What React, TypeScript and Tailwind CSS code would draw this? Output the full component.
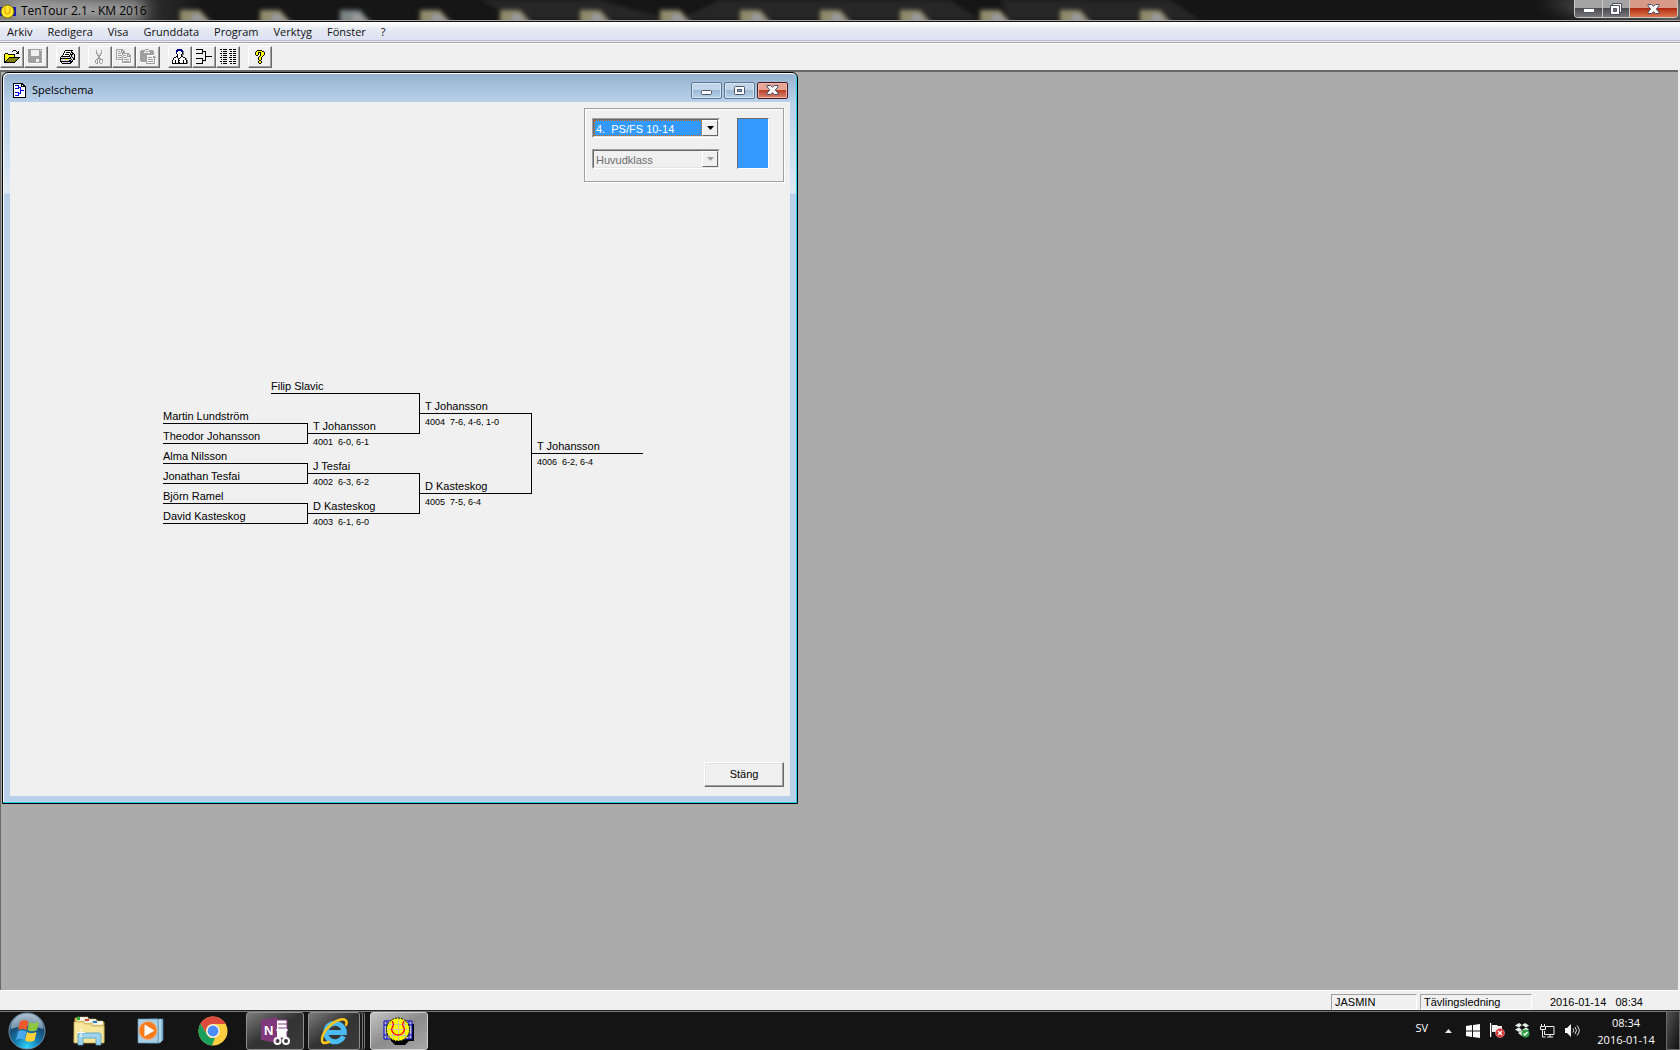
import type { ReactNode } from 'react';

const PALETTE: Record<string, string> = {
  k: '#000000',
  y: '#ffff00',
  o: '#808000',
  g: '#a0a0a0',
  w: '#ffffff',
  n: '#000080',
  b: '#0000e0',
  s: '#808080',
  c: '#d8d8d8',
};

const SPRITES = {
  open: [
    '.........kkk....',
    '........k...k.k.',
    '.............kk.',
    '.kkk........kkk.',
    'kyyykkkkkkk.....',
    'kyyyyyyyyyk.....',
    'kyyyyyyyyyk.....',
    'kyyyykkkkkkkkkkk',
    'kyyykoooooooook.',
    'kyykoooooooook..',
    'kykoooooooook...',
    'kkoooooooook....',
    'kkkkkkkkkkk.....',
  ],
  save: [
    'gggggggggggggg.',
    'ggg........g.gw',
    'ggg........gggw',
    'ggg........gggw',
    'ggg........gggw',
    'ggg........gggw',
    'ggg........gggw',
    'ggggggggggggggw',
    'ggggggggggggggw',
    'ggggggggggggggw',
    'gggggggg...gggw',
    'gggggggg...gggw',
    'gggggggg...gggw',
    '.gggggggggggggw',
    '..wwwwwwwwwwwww',
  ],
  print: [
    '.....kkkkkkkk...',
    '....kwwwwwwk....',
    '....kwkkkkwkk...',
    '...kwwwwwwk.kk..',
    '...kwkkkkwkkkck.',
    '..kwwwwwwkckcck.',
    '.kkkkkkkkkckcck.',
    'kccccccccckckck.',
    'kkkkkkkkkkkcckk.',
    'kccccyyyccckckk.',
    'kcccccccckkck..',
    'kkkkkkkkkkkkk...',
    '.kcccccccckk....',
    '..kkkkkkkkk.....',
  ],
  cut: [
    '.g....g...',
    '.g....gw..',
    '.g....gw..',
    '.gg..ggw..',
    '..g..g.w..',
    '..gggg....',
    '...gg.w...',
    '...gg.....',
    '..gggg....',
    '.gg.gggg..',
    'g.g.g..g..',
    'g.gwg..gw.',
    'g.gwg..gw.',
    '.gg..gg.w.',
  ],
  copy: [
    'ggggggg.........',
    'g....ggg........',
    'g.gg.g.gg.......',
    'g....gggg.......',
    'g.ggg.ggggggg...',
    'g.....g....ggg..',
    'g.gggg.ggg.g.gg.',
    'g.....g....gggg.',
    'g.gggg.gggg...gw',
    'g.....g.......gw',
    'ggggggg.ggggg.gw',
    '.wwwwwg.......gw',
    '......g.ggggg.gw',
    '......gggggggggw',
    '.......wwwwwwwww',
  ],
  paste: [
    '.....gggg.......',
    '.gggg....gggg...',
    'ggggg.gg.ggggg..',
    'gggg......gggg..',
    'gggggggggggggg..',
    'gggggggggggggg..',
    'gggggggwwwwwww..',
    'ggggggg......gg.',
    'ggggggg.gggg.ggg',
    'ggggggg.......gw',
    'ggggggg.ggggg.gw',
    'ggggggg.......gw',
    '.gggggg.ggggg.gw',
    '.wwwwwg.......gw',
    '......gggggggggw',
  ],
  person: [
    '.....nnnnn......',
    '....nnnnnnn.....',
    '....nnwwwnns....',
    '....nwwwwwns....',
    '....kwwwwwks....',
    '.....kwwwkss....',
    '.....kwwwks.....',
    '....kkwwwkk.....',
    '..kkwkwwkwwkk...',
    '.kwwwwkkwwwwwks.',
    '.kwwwwkwwwwwwks.',
    'kwwkwwkkwwwkwwks',
    'kwwkwwkwwwwkwwks',
    'kwwkwwkkwwwkwwks',
    'kkkkkkkkkkkkkkks',
  ],
  bracket: [
    'kkkkkkk.........',
    '......k.........',
    '......kkkk......',
    '......k..k......',
    'kkkkkkk..k......',
    '.........k......',
    '.........k......',
    '.........kkkkkkk',
    '.........k......',
    'kkkkkkk..k......',
    '......k..k......',
    '......kkkk......',
    '......k.........',
    '......k.........',
    'kkkkkkk.........',
  ],
  list: [
    'kk.kkkk..kkk.kkk',
    '................',
    '.k.kkkk...kk.kkk',
    '................',
    'kk.kkkk..kkk.kkk',
    '................',
    '.k.kkkk...kk.kkk',
    '................',
    'kk.kkkk..kkk.kkk',
    '................',
    '.k.kkkk...kk.kkk',
    '................',
    'kk.kkkk..kkk.kkk',
    '................',
    '.k.kkkk...kk.kkk',
  ],
  help: [
    '...kkkkk...',
    '..kyyyyykk.',
    '.kyykkkyyyk',
    '.kyyk.kyyyk',
    '.kyyk.kyyyk',
    '..kk..kyyk.',
    '.....kyyk..',
    '....kyyk...',
    '....kyyk...',
    '....kyyk...',
    '.....kk....',
    '....kyyk...',
    '....kyyk...',
    '.....kk....',
  ],
  schema: [
    'kkkkkkkkkk...',
    'kwwwwwwwkkk..',
    'kwbbbbwwkwkk.',
    'kwwwwbwwkkkkk',
    'kwwwwbbbwwwwk',
    'kwbbbbwbwwwwk',
    'kwwwwwwbwwwwk',
    'kwwwwwwbbbbwk',
    'kwwwwwwbwwwwk',
    'kwbbbbwbwwwwk',
    'kwwwwbbbwwwwk',
    'kwwwwbwwwwwwk',
    'kwbbbbwwwwwwk',
    'kwwwwwwwwwwwk',
    'kkkkkkkkkkkkk',
  ],
};

type SpriteName = keyof typeof SPRITES;

function Sprite({ name }: { name: SpriteName }) {
  const rows = SPRITES[name];
  const width = rows[0].length;
  return (
    <svg width={width} height={rows.length} shapeRendering="crispEdges" aria-hidden="true" className="shrink-0">
      {rows.flatMap((row, y) =>
        [...row].map((cell, x) =>
          PALETTE[cell] ? <rect key={`${x}-${y}`} x={x} y={y} width="1" height="1" fill={PALETTE[cell]} /> : null,
        ),
      )}
    </svg>
  );
}

const MENU = ['Arkiv', 'Redigera', 'Visa', 'Grunddata', 'Program', 'Verktyg', 'Fönster', '?'];

const TOOL_GROUPS: { icon: SpriteName; label: string; disabled?: boolean }[][] = [
  [
    { icon: 'open', label: 'Öppna' },
    { icon: 'save', label: 'Spara', disabled: true },
  ],
  [{ icon: 'print', label: 'Skriv ut' }],
  [
    { icon: 'cut', label: 'Klipp ut', disabled: true },
    { icon: 'copy', label: 'Kopiera', disabled: true },
    { icon: 'paste', label: 'Klistra in', disabled: true },
  ],
  [
    { icon: 'person', label: 'Spelare' },
    { icon: 'bracket', label: 'Spelschema' },
    { icon: 'list', label: 'Matchlista' },
  ],
  [{ icon: 'help', label: 'Hjälp' }],
];

// x is the left end of the line, y the line itself
const ENTRIES = [
  { x: 261, y: 291, name: 'Filip Slavic' },
  { x: 153, y: 321, name: 'Martin Lundström' },
  { x: 153, y: 341, name: 'Theodor Johansson' },
  { x: 153, y: 361, name: 'Alma Nilsson' },
  { x: 153, y: 381, name: 'Jonathan Tesfai' },
  { x: 153, y: 401, name: 'Björn Ramel' },
  { x: 153, y: 421, name: 'David Kasteskog' },
  { x: 303, y: 331, name: 'T Johansson', score: '4001  6-0, 6-1' },
  { x: 303, y: 371, name: 'J Tesfai', score: '4002  6-3, 6-2' },
  { x: 303, y: 411, name: 'D Kasteskog', score: '4003  6-1, 6-0' },
  { x: 415, y: 311, name: 'T Johansson', score: '4004  7-6, 4-6, 1-0' },
  { x: 415, y: 391, name: 'D Kasteskog', score: '4005  7-5, 6-4' },
  { x: 527, y: 351, name: 'T Johansson', score: '4006  6-2, 6-4' },
];

const LINES = [
  'M261 291H409V331H298',
  'M153 321H297V341H153',
  'M153 361H297V381H153',
  'M153 401H297V421H153',
  'M298 371H409V411H298',
  'M410 311H521V391H410',
  'M522 351H632',
].join('');

function Bracket() {
  return (
    <div className="absolute left-0 top-0 text-black">
      <svg width="640" height="430" shapeRendering="crispEdges" aria-hidden="true">
        <path d={LINES} transform="translate(.5 .5)" fill="none" stroke="#000" strokeLinecap="square" />
      </svg>
      {ENTRIES.map((entry) => (
        <div
          key={`${entry.x}-${entry.y}`}
          className="absolute whitespace-pre"
          style={{ left: entry.x, top: entry.y - 14 }}
        >
          <p className="text-[11px] leading-[14px]">{entry.name}</p>
          {entry.score && <p className="pt-1 text-[9px] leading-[10px]">{entry.score}</p>}
        </div>
      ))}
    </div>
  );
}

function ClassSelect({ label, value, disabled = false }: { label: string; value: string; disabled?: boolean }) {
  return (
    <div className="flex h-5 w-32 border border-b-white border-l-[#a0a0a0] border-r-white border-t-[#a0a0a0]">
      <div className="relative flex w-full border border-b-[#e3e3e3] border-l-[#696969] border-r-[#e3e3e3] border-t-[#696969]">
        <select
          aria-label={label}
          disabled={disabled}
          defaultValue={value}
          className={
            disabled
              ? 'w-full appearance-none bg-[#f0f0f0] pl-[2px] pt-px text-[11px] leading-4 text-[#6d6d6d] opacity-100'
              : 'mr-4 w-full appearance-none border border-dotted border-[#cc6600] bg-[#3399ff] pl-px pt-px text-[11px] leading-[14px] text-white outline-none'
          }
        >
          <option>{value}</option>
        </select>
        <span className="pointer-events-none absolute inset-y-0 right-0 flex w-4 items-center justify-center border border-b-[#696969] border-l-white border-r-[#696969] border-t-white bg-[#f0f0f0]">
          <svg width="7" height="4" aria-hidden="true">
            <path d="M0 0h7L3.500 4z" fill={disabled ? '#a0a0a0' : '#000'} />
          </svg>
        </span>
      </div>
    </div>
  );
}

function ChildButton({ label, close = false, children }: { label: string; close?: boolean; children: ReactNode }) {
  return (
    <button
      type="button"
      aria-label={label}
      className={
        close
          ? 'flex h-[17px] w-[31px] items-center justify-center rounded-[2px] border border-[#4c1a1e] bg-linear-to-b from-[#e8a595] from-45% via-[#bb4128] via-50% to-[#d88470] shadow-[inset_0_0_0_1px_#ecb8ac]'
          : 'flex h-[17px] w-[31px] items-center justify-center rounded-[2px] border border-[#5c7590] bg-linear-to-b from-[#c0d5ea] from-45% via-[#9cb9d6] via-50% to-[#b8d0e8] shadow-[inset_0_0_0_1px_#d8e6f4]'
      }
    >
      {children}
    </button>
  );
}

function CloseGlyph() {
  return (
    <svg width="13" height="10" viewBox="0 0 13 10" aria-hidden="true">
      <path
        d="M1 .5h3.500l2 1.700 2-1.700H12V2L9.300 5 12 8v1.500H8.500l-2-1.700-2 1.700H1V8l2.700-3L1 2z"
        fill="#f8f8f8"
        stroke="#4a4f66"
      />
    </svg>
  );
}

function SchemaWindow() {
  return (
    <section
      aria-label="Spelschema"
      className="flex h-[732px] w-[796px] flex-col rounded-t-[6px] border border-black bg-linear-to-b from-[#b9d1ea] from-[30px] via-[#dfeaf6] via-[120px] to-[#b9d1ea] to-[121px] shadow-[inset_-1px_-1px_0_#22d3ee,inset_1px_1px_0_#fff]"
    >
      <header className="mx-px mt-px flex h-7 shrink-0 items-center rounded-t-[5px] bg-linear-to-b from-[#98b2ce] to-[#b9d1ea] pl-[9px] pr-2 pt-1">
        <Sprite name="schema" />
        <h2 className="flex-1 pl-[6px] pt-px text-[11px] text-black font-['Open_Sans','Noto_Sans',sans-serif]">
          Spelschema
        </h2>
        <div className="flex gap-[2px]">
          <ChildButton label="Minimera">
            <svg width="11" height="5" aria-hidden="true" className="mt-1">
              <rect x=".5" y=".5" width="10" height="4" rx="1" fill="#fff" stroke="#4a5568" />
            </svg>
          </ChildButton>
          <ChildButton label="Maximera">
            <svg width="11" height="9" aria-hidden="true">
              <rect x=".5" y=".5" width="10" height="8" rx="1" fill="#fff" stroke="#4a5568" />
              <rect x="3.500" y="3.500" width="4" height="2" fill="#8fb0d4" stroke="#4a5568" />
            </svg>
          </ChildButton>
          <ChildButton label="Stäng fönster" close>
            <CloseGlyph />
          </ChildButton>
        </div>
      </header>
      <div className="relative mx-[7px] mb-[7px] flex flex-1 flex-col items-end justify-between bg-[#f0f0f0] px-[6px] pb-[9px] pt-[6px]">
        <Bracket />
        <div className="relative flex h-[74px] w-[200px] justify-between border border-[#a0a0a0] py-[9px] pl-[7px] pr-[14px] shadow-[1px_1px_0_#fff,inset_1px_1px_0_#fff]">
          <div className="flex flex-col gap-[11px]">
            <ClassSelect label="Klass" value={'4.\u00a0 PS/FS 10-14'} />
            <ClassSelect label="Klasstyp" value="Huvudklass" disabled />
          </div>
          <div className="h-[51px] w-8 border border-b-white border-l-[#696969] border-r-white border-t-[#696969] bg-[#3399ff]" />
        </div>
        <button
          type="button"
          className="relative h-[25px] w-20 border border-b-[#696969] border-l-white border-r-[#696969] border-t-white bg-[#f0f0f0] text-[11px] text-black shadow-[inset_-1px_-1px_0_#a0a0a0,inset_1px_1px_0_#e3e3e3]"
        >
          Stäng
        </button>
      </div>
    </section>
  );
}

const BACKDROP_ICONS = [180, 260, 340, 420, 500, 580, 660, 740, 820, 900, 980, 1060, 1140];

function TitleBar() {
  return (
    <header className="relative flex h-[22px] shrink-0 items-start justify-between overflow-hidden border-b border-[#111] bg-linear-to-r from-[#7d7d7d] via-[#161616] via-12% to-[#151515] shadow-[inset_0_-1px_0_#aaa6a8]">
      <svg width="100%" height="20" aria-hidden="true" className="absolute left-0 top-0">
        <defs>
          <filter id="soft" x="-30%" y="-80%" width="160%" height="260%">
            <feGaussianBlur stdDeviation="2" />
          </filter>
          <filter id="glow" x="-30%" y="-80%" width="160%" height="260%">
            <feGaussianBlur stdDeviation="8" />
          </filter>
        </defs>
        <path d="M480 0h120l70 20H520zM720 0h230l30 20H680zM1000 0h170l30 20H1010z" fill="#262626" filter="url(#soft)" />
        {BACKDROP_ICONS.map((x) => (
          <g key={x} filter="url(#soft)">
            <path d={`M${x} 10h20l12 14h-32z`} fill={x === 340 ? '#7d8484' : '#918b6c'} />
            <path d={`M${x + 12} 14h8l8 10h-16z`} fill="#9a9a9c" />
          </g>
        ))}
        <rect x="10" y="2" width="134" height="16" fill="#b8b8b8" filter="url(#glow)" />
        <rect x="1655" width="60" height="20" fill="#888" filter="url(#glow)" />
        <path d="M1540 0h140v20h-80z" fill="#5c5c5c" filter="url(#glow)" />
      </svg>
      <div className="relative flex h-[22px] items-center gap-[5px]">
        <svg width="16" height="15" viewBox="0 0 16 15" aria-hidden="true">
          <path d="M0 3h16v9H0z" fill="#1a1ab0" />
          <circle cx="7.500" cy="7.500" r="6.500" fill="#ffe92e" stroke="#7a6a00" />
          <path d="M5 3v4a2.500 3 0 0 0 5 0V3" fill="none" stroke="#f08a00" />
        </svg>
        <h1 className="text-[12px] text-black font-['Open_Sans','Noto_Sans',sans-serif]">TenTour 2.1 - KM 2016</h1>
      </div>
      <div className="relative mr-[2px] flex h-[18px] divide-x divide-[#c8c8c8] overflow-hidden rounded-b-[4px] border border-t-0 border-[#c8c8c8]">
        <button type="button" aria-label="Minimera program" className="flex w-7 items-center justify-center bg-linear-to-b from-[#a4a4a4] from-45% via-[#4c4c50] via-50% to-[#77777a]">
          <svg width="12" height="5" aria-hidden="true" className="mt-1">
            <rect x=".5" y=".5" width="11" height="4" fill="#fff" stroke="#55566a" />
          </svg>
        </button>
        <button type="button" aria-label="Återställ" className="flex w-[27px] items-center justify-center bg-linear-to-b from-[#a4a4a4] from-45% via-[#4c4c50] via-50% to-[#77777a]">
          <svg width="12" height="12" viewBox="0 0 12 12" aria-hidden="true">
            <path d="M2.500.5h9v9h-9z" fill="#fff" stroke="#4a4b5e" />
            <path d="M.5 2.500h9v9h-9z" fill="#fff" stroke="#4a4b5e" />
            <path d="M3.500 5.500h3v3h-3z" fill="#77777a" stroke="#4a4b5e" />
          </svg>
        </button>
        <button type="button" aria-label="Avsluta" className="flex w-[47px] items-center justify-center bg-linear-to-b from-[#d89a88] from-45% via-[#b02a12] via-50% to-[#dc7448]">
          <CloseGlyph />
        </button>
      </div>
    </header>
  );
}

function MenuBar() {
  return (
    <nav
      aria-label="Meny"
      className="flex h-[19px] shrink-0 items-center gap-[15px] border-b border-[#b4bad0] bg-linear-to-b from-white from-5% via-[#e6eaf2] via-38% to-[#dde2f4] pl-[7px] pt-[2px] text-[11px] text-[#111] font-['Open_Sans','Noto_Sans',sans-serif]"
    >
      {MENU.map((item) => (
        <button key={item} type="button" className="leading-4">
          {item}
        </button>
      ))}
    </nav>
  );
}

function ToolBar() {
  return (
    <div
      role="toolbar"
      aria-label="Verktygsfält"
      className="mt-px flex h-7 shrink-0 items-start gap-2 border-t border-[#a0a0a0] bg-[#f0f0f0] pt-[3px] shadow-[inset_0_1px_0_#fff]"
    >
      {TOOL_GROUPS.map((group) => (
        <div key={group[0].icon} className="flex">
          {group.map((tool) => (
            <button
              key={tool.icon}
              type="button"
              aria-label={tool.label}
              disabled={tool.disabled}
              className="flex h-[22px] w-6 items-center justify-center border border-b-[#696969] border-l-white border-r-[#696969] border-t-white pb-px pr-px shadow-[inset_-1px_-1px_0_#a0a0a0]"
            >
              <Sprite name={tool.icon} />
            </button>
          ))}
        </div>
      ))}
    </div>
  );
}

function StatusBar() {
  return (
    <footer className="flex h-5 shrink-0 items-center justify-end border-t border-white bg-[#f0f0f0] pt-[2px] text-[11px] leading-[14px] text-black">
      <span className="mr-[3px] h-4 w-[86px] border border-b-white border-l-[#a0a0a0] border-r-white border-t-[#a0a0a0] pl-[3px]">
        JASMIN
      </span>
      <span className="mr-[18px] h-4 w-28 border border-b-white border-l-[#a0a0a0] border-r-white border-t-[#a0a0a0] pl-[3px]">
        Tävlingsledning
      </span>
      <time className="w-[130px] whitespace-pre">2016-01-14   08:34</time>
    </footer>
  );
}

function StartOrb() {
  return (
    <svg width="38" height="38" viewBox="0 0 38 38" aria-hidden="true">
      <defs>
        <radialGradient id="orb" cx=".5" cy=".95" r=".9">
          <stop offset="0" stopColor="#35d4fa" />
          <stop offset=".35" stopColor="#1382b8" />
          <stop offset=".7" stopColor="#174a72" />
          <stop offset="1" stopColor="#8fa6b8" />
        </radialGradient>
      </defs>
      <circle cx="19" cy="19" r="18" fill="url(#orb)" stroke="#6f93ab" />
      <path d="M3 17a16 15 0 0 1 32 0q-16-6-32 0z" fill="#c9d8e4" opacity=".5" />
      <path d="M12 9.500q4-3 8.500 0l-2 8.500q-4-2-8.500 0z" fill="#ee5a2a" />
      <path d="M21.500 10q4 2.500 9.500-.5l-2 8.500q-5 2.500-9.500 0z" fill="#8dc63f" />
      <path d="M10 19.500q4-3 8.500 0l-2 8.500q-4-2.500-8.500 0z" fill="#4aa8e8" />
      <path d="M19 20q4 2.500 9.500 0l-2 8.500q-5 2.500-9.500 0z" fill="#ffd23c" />
    </svg>
  );
}

function ExplorerIcon() {
  return (
    <svg width="32" height="30" viewBox="0 0 32 30" aria-hidden="true">
      <path d="M2 4V2h13l2 2h7l1 2h6v20H1z" fill="#e9cf73" stroke="#b08e3a" />
      <path d="M4 1h11v4H4zM11 3h12v4H11zM19 5h11v4H19z" fill="#fdfdf5" stroke="#c0b070" strokeWidth=".5" />
      <path d="M4 1h3v3H4z" fill="#20b030" />
      <path d="M12 3h4v2h-4z" fill="#d04030" />
      <path d="M20 5h4v2h-4z" fill="#2080d0" />
      <path d="M1 6h9l2 2h6l1 2h12v17H1z" fill="#f5e69c" stroke="#c8a850" strokeWidth=".7" />
      <path d="M5 29V19q0-2 2-2h19q2 0 2 2v10h-5v-7H10v7z" fill="#9fd3ec" stroke="#4d9cc4" strokeWidth=".8" />
      <path d="M8 12v9M4 16.500h8" stroke="#fff" strokeWidth=".9" />
    </svg>
  );
}

function PlayerIcon() {
  return (
    <svg width="28" height="26" viewBox="0 0 28 26" aria-hidden="true">
      <path d="M12 1h14v21l-3 3H12z" fill="#8bbcd8" stroke="#4d84a8" strokeWidth=".7" />
      <path d="M20 1v23M23 1v23" stroke="#d9eef8" />
      <path d="M1 1h20v24H1z" fill="#a9cfe4" stroke="#5b93b5" strokeWidth=".7" />
      <circle cx="11" cy="12.500" r="9" fill="#f57c1f" stroke="#fbb070" strokeWidth=".8" />
      <path d="M7.500 6.500v12l10-6z" fill="#fff" />
    </svg>
  );
}

function ChromeIcon() {
  return (
    <svg width="30" height="30" viewBox="0 0 30 30" aria-hidden="true">
      <circle cx="15" cy="15" r="14.500" fill="#ffcd40" />
      <path d="M2.400 7.800A14.500 14.500 0 0 1 27.600 8H15a7 7 0 0 0-6.100 10.500z" fill="#dd4b3e" />
      <path d="M2.400 7.800 8.900 18.500A7 7 0 0 0 17 21.700l-3 7.800A14.500 14.500 0 0 1 2.400 7.800z" fill="#1a9f5c" />
      <circle cx="15" cy="15" r="6.800" fill="#f4f4f4" />
      <circle cx="15" cy="15" r="5.400" fill="#4b8bf4" />
    </svg>
  );
}

function ClipperIcon() {
  return (
    <svg width="30" height="30" viewBox="0 0 30 30" aria-hidden="true">
      <path d="M16 4h11v18H16z" fill="#fff" stroke="#80397b" />
      <path d="M18 8h9M18 12h9" stroke="#80397b" />
      <path d="M1 4 17 1v26L1 24z" fill="#80397b" />
      <text x="4" y="19" className="text-[13px] font-bold" fill="#fff">
        N
      </text>
      <path d="m17 13 9 9M27 13l-9 9" stroke="#fff" strokeWidth="3" />
      <circle cx="17.500" cy="25" r="3" fill="none" stroke="#fff" strokeWidth="2" />
      <circle cx="26" cy="25" r="3" fill="none" stroke="#fff" strokeWidth="2" />
    </svg>
  );
}

function ExplorerBrowserIcon() {
  return (
    <svg width="32" height="32" viewBox="0 0 32 32" aria-hidden="true">
      <path d="M25.500 21.300a9.300 9.300 0 1 1 .8-3.800H9" fill="none" stroke="#4bbcf2" strokeWidth="5" />
      <path
        d="M28 10c2-4-1-7-7-5C12 8 3 19 4 26c1 3 4 2 7 1"
        fill="none"
        stroke="#f8c51c"
        strokeWidth="2.500"
        strokeLinecap="round"
      />
    </svg>
  );
}

function TenTourIcon() {
  return (
    <svg width="32" height="28" viewBox="0 0 32 28" aria-hidden="true">
      <path d="M6 7h25v17h-5l-4 4H12l-4-4z" fill="#000" />
      <path d="M1 4h28v18H1z" fill="#c0c0c0" stroke="#0000c8" />
      <path d="M1 8h4M1 18h4M25 8h4M25 18h4M4 4v18M26 4v18" stroke="#0000c8" />
      <circle cx="15" cy="12.500" r="11.500" fill="#ffff00" stroke="#000" strokeDasharray="2 1" />
      <path d="M6 7.500h18M4 12.500h22M6 18.500h18M9.500 4v17M15.500 2v21M21.500 4v17" stroke="#c8c8a0" />
      <path d="M9 4q2 3 1 5-2 3-1 5 2 4 6 4t6-4q1-2-1-5-1-2 1-5" fill="none" stroke="#ff0000" strokeWidth="1.300" />
    </svg>
  );
}

function TaskButton({ label, active = false, children }: { label: string; active?: boolean; children: ReactNode }) {
  return (
    <button
      type="button"
      aria-label={label}
      className={
        active
          ? 'flex h-[38px] w-[58px] items-center justify-center rounded-[3px] border border-[#d0d0d0] bg-linear-to-br from-[#c4c4c4] via-[#8c8c8c] via-50% to-[#a8a8a8]'
          : 'flex h-[38px] w-[58px] items-center justify-center rounded-[3px] border border-[#8e8e8e] bg-linear-to-br from-[#7c7c7c] via-[#333] via-50% to-[#3a3a3a]'
      }
    >
      {children}
    </button>
  );
}

function Tray() {
  return (
    <div className="flex items-center text-[11px] text-white font-['Open_Sans','Noto_Sans',sans-serif]">
      <span className="mr-[17px] pb-1">SV</span>
      <div className="flex items-center gap-[10px]">
        <svg width="7" height="4" aria-hidden="true" className="mr-1">
          <path d="M3.500 0 7 4H0z" fill="#e8e8e8" />
        </svg>
        <svg width="14" height="14" viewBox="0 0 14 14" aria-hidden="true">
          <path d="M0 2l6-1v5.500H0zM7 1l7-1v6.500H7zM0 7.500h6V13l-6-1zM7 7.500h7V14l-7-1z" fill="#fff" />
        </svg>
        <svg width="15" height="15" viewBox="0 0 15 15" aria-hidden="true">
          <path d="M.5 0v14" stroke="#fff" strokeWidth="1.500" />
          <path d="M2 2h5l1 1h4v6H2z" fill="#f0f0f0" />
          <circle cx="10" cy="10" r="4.500" fill="#d83030" stroke="#f4a0a0" strokeWidth=".6" />
          <path d="m8 8 4 4M12 8l-4 4" stroke="#fff" strokeWidth="1.500" />
        </svg>
        <svg width="15" height="15" viewBox="0 0 15 15" aria-hidden="true">
          <path d="m4 0 3 2-3 2.500-4-2zM10 0l4 2.500-3 2-4-2.500zM0 6.500l4-2L7 7 4 9zM14 6.500l-3-2L7 7l3 2zM3 10l4-2.500L11 10l-4 3z" fill="#e4f0e8" />
          <circle cx="10.500" cy="10.500" r="4" fill="#2ea043" />
          <path d="m8.500 10.500 1.500 1.500 2.500-3" fill="none" stroke="#fff" strokeWidth="1.300" />
        </svg>
        <svg width="15" height="14" viewBox="0 0 15 14" aria-hidden="true">
          <path d="M6 2.500h8v8H4.500V7M7 13h6M10 10v3M1.500 0v3M4.500 0v3M.5 2.500h5v3h-5zM2.500 6v7h3" fill="none" stroke="#f0f0f0" />
        </svg>
        <svg width="15" height="13" viewBox="0 0 15 13" aria-hidden="true">
          <path d="M0 4h2l4-4v13L2 9H0z" fill="#f4f4f4" />
          <path d="M8 4.500q1.500 2 0 4M10 3q3 3.500 0 7M12 1.500q4.500 5 0 10" fill="none" stroke="#e0e0e0" />
        </svg>
      </div>
      <time className="ml-[14px] mr-2 w-16 text-center leading-[17px]">
        08:34
        <br />
        2016-01-14
      </time>
      <button
        type="button"
        aria-label="Visa skrivbordet"
        className="h-[39px] w-[14px] border border-[#6a6a6a] bg-linear-to-br from-[#555] to-[#111]"
      />
    </div>
  );
}

function Taskbar() {
  return (
    <footer className="flex h-10 shrink-0 items-center justify-between border-t border-[#222] bg-[#141414] shadow-[inset_0_1px_0_#777]">
      <div className="flex items-center">
        <button type="button" aria-label="Start" className="ml-2">
          <StartOrb />
        </button>
        <button type="button" aria-label="Utforskaren" className="ml-[27px]">
          <ExplorerIcon />
        </button>
        <button type="button" aria-label="Mediaspelare" className="ml-8">
          <PlayerIcon />
        </button>
        <button type="button" aria-label="Chrome" className="ml-[33px] mr-[18px]">
          <ChromeIcon />
        </button>
        <TaskButton label="OneNote">
          <ClipperIcon />
        </TaskButton>
        <div className="ml-1 mr-[5px] flex h-[38px] w-[57px] rounded-[3px] border-r border-[#777] pr-1">
          <button
            type="button"
            aria-label="Internet Explorer"
            className="flex flex-1 items-center justify-center rounded-[3px] border border-[#8e8e8e] bg-linear-to-br from-[#7c7c7c] via-[#333] via-50% to-[#3a3a3a] shadow-[2px_0_0_#1a1a1a,3px_0_0_#777]"
          >
            <ExplorerBrowserIcon />
          </button>
        </div>
        <TaskButton label="TenTour" active>
          <TenTourIcon />
        </TaskButton>
      </div>
      <Tray />
    </footer>
  );
}

export default function App() {
  return (
    <div className="flex h-screen min-h-[860px] flex-col overflow-hidden bg-[#f0f0f0] font-['Liberation_Sans',Arial,sans-serif]">
      <TitleBar />
      <MenuBar />
      <ToolBar />
      <main className="mr-[2px] flex-1 border-l border-t-2 border-l-[#696969] border-t-[#696969] bg-[#ababab] pl-px">
        <SchemaWindow />
      </main>
      <StatusBar />
      <Taskbar />
    </div>
  );
}
